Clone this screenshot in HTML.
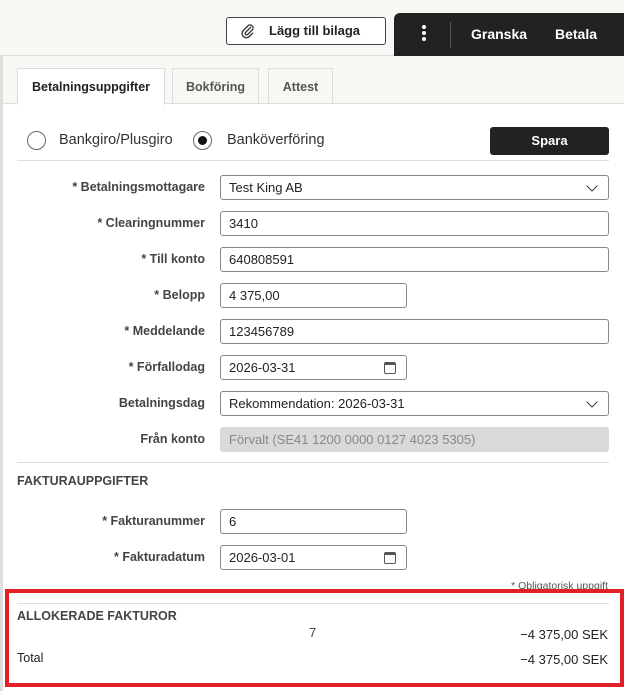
<!DOCTYPE html>
<html><head><style>
*{box-sizing:border-box;margin:0;padding:0}
body{width:624px;height:691px;background:#fff;font-family:"Liberation Sans",sans-serif;color:#222;position:relative;overflow:hidden;font-size:13px}
.a{position:absolute}
.top{left:0;top:0;width:624px;height:56px;background:#f8f7f4;border-bottom:1px solid #ddd}
.lbl{right:419px;font-weight:bold;color:#444;font-size:12.5px;text-align:right;white-space:nowrap}
.in{left:220px;height:25px;border:1px solid #888;border-radius:3px;padding-left:8px;line-height:23px;font-size:13px;background:#fff}
.full{width:389px}.half{width:187px}
.chev{position:absolute;right:12px;top:6px;width:8px;height:8px;border-right:1.3px solid #333;border-bottom:1.3px solid #333;transform:rotate(45deg)}
.cal{position:absolute;right:10px;top:6px;width:12px;height:12px;border:1.3px solid #555;border-radius:2px;border-top-width:3px}
</style></head><body>
<div class="a top"></div>
<div class="a" style="left:226px;top:17px;width:160px;height:28px;border:1px solid #444;border-radius:3px;background:#fff;font-weight:bold;font-size:13px;line-height:26px;padding-left:42px">Lägg till bilaga</div>
<svg class="a" style="left:240px;top:23px" width="16" height="16" viewBox="0 0 16 16"><path d="M11 4 L5.5 9.5 a1.5 1.5 0 0 0 2.1 2.1 L12.5 6.7 a3 3 0 0 0 -4.2 -4.2 L3.3 7.5 a4.2 4.2 0 0 0 6 6 L13 9.8" fill="none" stroke="#333" stroke-width="1.3"/></svg>
<div class="a" style="left:394px;top:13px;width:230px;height:43px;background:#222;border-radius:6px 0 0 0"></div>
<div class="a" style="left:422px;top:25px;width:4px;height:4px;background:#fff;border-radius:50%;box-shadow:0 6px 0 #fff,0 12px 0 #fff"></div>
<div class="a" style="left:450px;top:22px;width:1px;height:26px;background:#555"></div>
<div class="a" style="left:471px;top:26px;color:#fff;font-weight:bold;font-size:14px">Granska</div>
<div class="a" style="left:555px;top:26px;color:#fff;font-weight:bold;font-size:14px">Betala</div>
<div class="a" style="left:0;top:56px;width:3px;height:635px;background:#ddd"></div>
<div class="a" style="left:3px;top:56px;width:621px;height:48px;background:#f8f7f4;border-bottom:1px solid #ddd"></div>
<div class="a" style="left:17px;top:68px;width:148px;height:37px;background:#fff;border:1px solid #ddd;border-bottom:none;font-weight:bold;font-size:12.5px;text-align:center;line-height:36px">Betalningsuppgifter</div>
<div class="a" style="left:172px;top:68px;width:87px;height:36px;border:1px solid #ddd;border-bottom:none;font-weight:bold;font-size:12.5px;color:#555;text-align:center;line-height:36px">Bokföring</div>
<div class="a" style="left:268px;top:68px;width:65px;height:36px;border:1px solid #ddd;border-bottom:none;font-weight:bold;font-size:12.5px;color:#555;text-align:center;line-height:36px">Attest</div>
<div class="a" style="left:27px;top:131px;width:19px;height:19px;border:1.3px solid #666;border-radius:50%"></div>
<div class="a" style="left:59px;top:132px;font-size:14.5px;color:#333">Bankgiro/Plusgiro</div>
<div class="a" style="left:193px;top:131px;width:19px;height:19px;border:1.3px solid #666;border-radius:50%"></div>
<div class="a" style="left:198px;top:136px;width:9px;height:9px;background:#111;border-radius:50%"></div>
<div class="a" style="left:227px;top:132px;font-size:14.5px;color:#333">Banköverföring</div>
<div class="a" style="left:490px;top:127px;width:119px;height:28px;background:#222;border-radius:3px;color:#fff;font-weight:bold;font-size:13px;text-align:center;line-height:28px">Spara</div>
<div class="a" style="left:17px;top:160px;width:592px;height:1px;background:#ddd"></div>

<div class="a lbl" style="top:180px">* Betalningsmottagare</div>
<div class="a in full" style="top:175px">Test King AB<span class="chev"></span></div>
<div class="a lbl" style="top:216px">* Clearingnummer</div>
<div class="a in full" style="top:211px">3410</div>
<div class="a lbl" style="top:252px">* Till konto</div>
<div class="a in full" style="top:247px">640808591</div>
<div class="a lbl" style="top:288px">* Belopp</div>
<div class="a in half" style="top:283px">4 375,00</div>
<div class="a lbl" style="top:324px">* Meddelande</div>
<div class="a in full" style="top:319px">123456789</div>
<div class="a lbl" style="top:360px">* Förfallodag</div>
<div class="a in half" style="top:355px">2026-03-31<span class="cal"></span></div>
<div class="a lbl" style="top:396px">Betalningsdag</div>
<div class="a in full" style="top:391px">Rekommendation: 2026-03-31<span class="chev"></span></div>
<div class="a lbl" style="top:432px">Från konto</div>
<div class="a in full" style="top:427px;background:#d9d9d9;border-color:#d9d9d9;color:#888">Förvalt (SE41 1200 0000 0127 4023 5305)</div>
<div class="a" style="left:17px;top:462px;width:592px;height:1px;background:#ddd"></div>
<div class="a" style="left:17px;top:474px;font-weight:bold;font-size:12.5px;color:#444">FAKTURAUPPGIFTER</div>
<div class="a lbl" style="top:514px">* Fakturanummer</div>
<div class="a in half" style="top:509px">6</div>
<div class="a lbl" style="top:550px">* Fakturadatum</div>
<div class="a in half" style="top:545px">2026-03-01<span class="cal"></span></div>
<div class="a" style="right:16px;top:580px;font-size:10.5px;color:#555">* Obligatorisk uppgift</div>
<div class="a" style="left:5px;top:589px;width:619px;height:98px;border:4px solid #e32028;background:#fff"></div>
<div class="a" style="left:17px;top:603px;width:592px;height:1px;background:#ddd"></div>
<div class="a" style="left:17px;top:609px;font-weight:bold;font-size:12.5px;color:#444">ALLOKERADE FAKTUROR</div>
<div class="a" style="left:309px;top:625px;font-size:13px;color:#444">7</div>
<div class="a" style="right:16px;top:627px;font-size:13px">−4 375,00 SEK</div>
<div class="a" style="left:17px;top:651px;font-size:12.5px">Total</div>
<div class="a" style="right:16px;top:652px;font-size:13px">−4 375,00 SEK</div>
</body></html>
